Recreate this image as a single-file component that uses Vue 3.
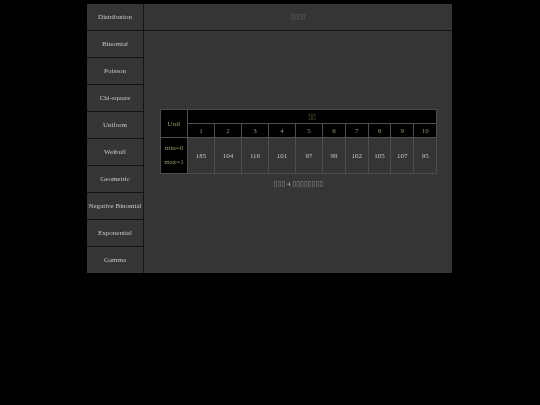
<script setup>
const dists = ['Binomial', 'Poisson', 'Chi-square', 'Uniform', 'Weibull', 'Geometric', 'Negative Binomial', 'Exponential', 'Gamma']
const counts = [185, 104, 116, 101, 97, 99, 102, 105, 107, 95]
</script>

<template>
  <div class="page">
    <div class="side">
      <div class="item">Distribution</div>
      <div v-for="d in dists" :key="d" class="item">{{ d }}</div>
    </div>
    <div class="main">
      <div class="title"><span class="box">▯▯▯▯</span></div>
      <div class="body">
        <table>
          <colgroup>
            <col class="wide">
            <col v-for="n in 5" :key="n" class="wide">
            <col v-for="n in 5" :key="n" class="thin">
          </colgroup>
          <tbody>
            <tr>
              <th rowspan="2" class="unif">Unif</th>
              <th colspan="10"><span class="box">▯▯</span></th>
            </tr>
            <tr>
              <th v-for="(c, i) in counts" :key="i">{{ i + 1 }}</th>
            </tr>
            <tr class="vals">
              <th class="range">min=0<br>max=1</th>
              <td v-for="(c, i) in counts" :key="i">{{ c }}</td>
            </tr>
          </tbody>
        </table>
        <p class="note"><span class="box">▯▯▯</span> 4 <span class="box">▯▯▯▯▯▯▯▯</span></p>
      </div>
    </div>
  </div>
</template>

<style>
html, body { background: #000; }
</style>

<style scoped>
.page {
  display: flex;
  width: 365px;
  height: 269px;
  margin: 4px 0 0 87px;
  background: #353535;
  font-family: "Liberation Serif", serif;
  font-size: 7px;
  filter: blur(0.3px);
}
.side {
  width: 56px;
  flex: none;
  border-right: 1px solid #141414;
}
.item {
  height: 26px;
  border-bottom: 1px solid #141414;
  display: flex;
  align-items: center;
  justify-content: center;
  color: #c0cbc2;
  white-space: nowrap;
}
.item:last-child { border-bottom: none; }
.main { flex: 1; }
.title {
  height: 26px;
  border-bottom: 1px solid #141414;
  display: flex;
  align-items: center;
  justify-content: center;
  color: #7c7c7c;
}
.box {
  font-family: "DejaVu Sans", sans-serif;
  font-size: 7px;
  opacity: 0.75;
}
.body { padding: 78px 0 0 16px; }
table {
  width: 277px;
  table-layout: fixed;
  border-collapse: collapse;
  border: 1px solid #5a5a5a;
}
.wide { width: 27px; }
.thin { width: 22.8px; }
th, td {
  border: 1px solid #4e4e4e;
  text-align: center;
  padding: 0;
  font-weight: normal;
}
th {
  background: #000;
  color: #8f9e5e;
  height: 13px;
}
.unif { height: 27px; }
.vals td { height: 35px; }
.vals .range { height: 34px; line-height: 14px; padding-bottom: 1px; }
td { color: #c4c4c4; }
.note {
  margin: 6px 0 0;
  width: 277px;
  text-align: center;
  color: #b0b0b0;
}
</style>
